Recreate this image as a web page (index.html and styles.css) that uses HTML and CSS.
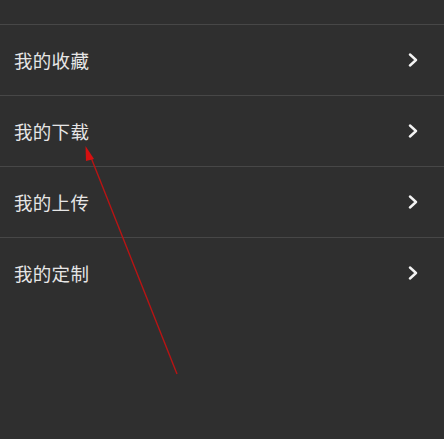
FILE: index.html
```html
<!DOCTYPE html>
<html lang="zh">
<head>
<meta charset="utf-8">
<link rel="stylesheet" href="styles.css">
</head>
<body>
<div class="page">
  <div class="top"></div>
  <ul class="menu">
    <li class="row"><span class="label">我的收藏</span><svg class="chev" viewBox="0 0 10 14" width="10" height="14"><path d="M2 1.5 L8 7 L2 12.5" fill="none" stroke="#f4f4f4" stroke-width="2.4" stroke-linecap="round" stroke-linejoin="round"/></svg></li>
    <li class="row"><span class="label">我的下载</span><svg class="chev" viewBox="0 0 10 14" width="10" height="14"><path d="M2 1.5 L8 7 L2 12.5" fill="none" stroke="#f4f4f4" stroke-width="2.4" stroke-linecap="round" stroke-linejoin="round"/></svg></li>
    <li class="row"><span class="label">我的上传</span><svg class="chev" viewBox="0 0 10 14" width="10" height="14"><path d="M2 1.5 L8 7 L2 12.5" fill="none" stroke="#f4f4f4" stroke-width="2.4" stroke-linecap="round" stroke-linejoin="round"/></svg></li>
    <li class="row last"><span class="label">我的定制</span><svg class="chev" viewBox="0 0 10 14" width="10" height="14"><path d="M2 1.5 L8 7 L2 12.5" fill="none" stroke="#f4f4f4" stroke-width="2.4" stroke-linecap="round" stroke-linejoin="round"/></svg></li>
  </ul>
  <svg class="annot" viewBox="0 0 444 439" width="444" height="439">
    <line x1="177" y1="374" x2="90" y2="155" stroke="#b81414" stroke-width="1.4"/>
    <polygon points="85.5,146 94,159 86,161" fill="#d61010"/>
  </svg>
</div>
</body>
</html>
```
FILE: styles.css
```css
html, body {
  margin: 0;
  padding: 0;
  background: #2f2f2f;
}
.page {
  position: relative;
  width: 444px;
  height: 439px;
  overflow: hidden;
  background: #2f2f2f;
  font-family: "Noto Sans CJK SC", "Noto Sans", sans-serif;
}
.top {
  height: 24px;
  border-bottom: 1px solid #474747;
}
.menu {
  list-style: none;
  margin: 0;
  padding: 0;
}
.row {
  height: 70px;
  border-bottom: 1px solid #474747;
  display: flex;
  align-items: center;
  justify-content: space-between;
  padding: 0 26px 0 14px;
}
.row.last {
  border-bottom: none;
}
.label {
  color: #e6e6e6;
  font-size: 18.5px;
  letter-spacing: 0.3px;
}
.chev {
  display: block;
}
.annot {
  position: absolute;
  left: 0;
  top: 0;
}
```
